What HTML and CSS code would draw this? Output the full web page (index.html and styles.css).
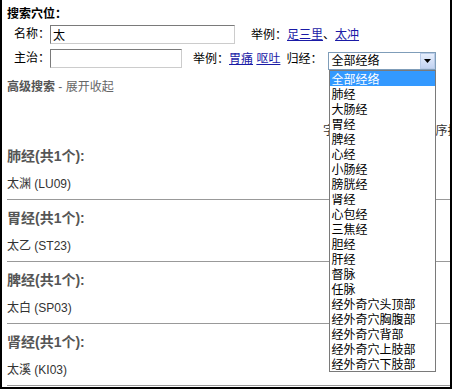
FILE: index.html
```html
<!DOCTYPE html>
<html lang="zh-CN">
<head>
    <meta charset="UTF-8">
    <title>搜索穴位</title>
    <link rel="stylesheet" href="styles.css">
</head>
<body>
    <div class="frame">
        <div class="search">
            <div class="title">搜索穴位：</div>
            <div class="row">
                <span class="label">名称：</span>
                <input class="name-input" type="text" value="太">
                <span class="example">举例：<a href="#">足三里</a>、<a href="#">太冲</a></span>
            </div>
            <div class="row">
                <span class="label">主治：</span>
                <input class="cure-input" type="text">
                <span class="example short">举例：<a href="#">胃痛</a> <a href="#">呕吐</a></span>
                <span class="meridian-label">归经：</span>
                <div class="select">
                    <span class="select-value">全部经络</span>
                    <span class="select-btn">
                        <svg width="7" height="4" viewBox="0 0 7 4"><path d="M0 0h7L3.5 4z" fill="#000"/></svg>
                    </span>
                    <ul class="select-list">
                        <li class="active">全部经络</li>
                        <li>肺经</li>
                        <li>大肠经</li>
                        <li>胃经</li>
                        <li>脾经</li>
                        <li>心经</li>
                        <li>小肠经</li>
                        <li>膀胱经</li>
                        <li>肾经</li>
                        <li>心包经</li>
                        <li>三焦经</li>
                        <li>胆经</li>
                        <li>肝经</li>
                        <li>督脉</li>
                        <li>任脉</li>
                        <li>经外奇穴头顶部</li>
                        <li>经外奇穴胸腹部</li>
                        <li>经外奇穴背部</li>
                        <li>经外奇穴上肢部</li>
                        <li>经外奇穴下肢部</li>
                    </ul>
                </div>
            </div>
            <div class="advanced"><b>高级搜索</b> - 展开收起</div>
            <div class="sort">字号：大 中 小 | 按顺序排序：</div>
        </div>

        <div class="group">
            <div class="group-title">肺经(共1个):</div>
            <div class="point">太渊 (LU09)</div>
        </div>
        <div class="group">
            <div class="group-title">胃经(共1个):</div>
            <div class="point">太乙 (ST23)</div>
        </div>
        <div class="group">
            <div class="group-title">脾经(共1个):</div>
            <div class="point">太白 (SP03)</div>
        </div>
        <div class="group">
            <div class="group-title">肾经(共1个):</div>
            <div class="point">太溪 (KI03)</div>
        </div>
    </div>
</body>
</html>
```

FILE: styles.css
```css
body {
    margin: 0;
    font-family: "Liberation Sans", "Noto Sans CJK SC", sans-serif;
    font-size: 12px;
    background-color: #fff;
}
.frame {
    width: 452px;
    height: 389px;
    box-sizing: border-box;
    border-left: 2px solid #000;
    border-right: 2px solid #000;
    border-bottom: 2px solid #000;
    padding-left: 5px;
    overflow: hidden;
}
.search {
    display: flex;
    flex-direction: column;
}
.title {
    margin-top: 6px;
    line-height: 16px;
    font-weight: bold;
    color: #000;
}
.row {
    display: flex;
    align-items: flex-start;
    margin-top: 3px;
    height: 19px;
    line-height: 19px;
}
.row + .row {
    margin-top: 5px;
}
.label {
    margin-left: 7px;
    width: 36px;
}
.row input {
    box-sizing: border-box;
    height: 19px;
    margin: 0;
    padding: 0 2px;
    border: 1px solid #7a7a7a;
    border-right-color: #ccc;
    border-bottom-color: #ccc;
    font-family: "Noto Sans CJK SC", sans-serif;
    font-size: 12px;
    color: #000;
}
.name-input {
    width: 185px;
}
.cure-input {
    width: 132px;
}
.example {
    margin-left: 16px;
    line-height: 20px;
}
.example.short {
    margin-left: 11px;
}
.example a {
    color: #1a1aa6;
    text-decoration: underline;
}
.meridian-label {
    margin-left: 6px;
    line-height: 20px;
    width: 42px;
}
.select {
    position: relative;
    box-sizing: border-box;
    width: 108px;
    height: 18px;
    margin-top: 3px;
    border: 1px solid #7f9db9;
    display: flex;
    align-items: center;
}
.select-value {
    flex: 1;
    padding-left: 2px;
    line-height: 16px;
}
.select-btn {
    width: 15px;
    height: 16px;
    box-sizing: border-box;
    border: 1px solid #b8cbe8;
    background: linear-gradient(#e6eefc, #c2d3f2);
    display: flex;
    align-items: center;
    justify-content: center;
}
.select-list {
    position: absolute;
    left: 0;
    top: 17px;
    width: 107px;
    box-sizing: border-box;
    margin: 0;
    padding: 0;
    list-style: none;
    background-color: #fff;
    border: 1px solid #7a7a7a;
    z-index: 2;
}
.select-list li {
    height: 15px;
    line-height: 15px;
    padding-left: 1px;
    font-family: "Noto Sans CJK SC", sans-serif;
    font-size: 12px;
    color: #000;
    white-space: nowrap;
}
.select-list li.active {
    background-color: #3399ff;
    color: #fff;
}
.advanced {
    margin-top: 11px;
    line-height: 16px;
    color: #666;
}
.advanced b {
    color: #555;
}
.sort {
    margin-top: 29px;
    line-height: 14px;
    height: 14px;
    padding-left: 316px;
    white-space: nowrap;
    color: #333;
}
.group {
    border-bottom: 1px solid #999;
    height: 61px;
    padding-top: 8px;
    box-sizing: border-box;
    height: 62px;
}
.group-title {
    line-height: 20px;
    font-size: 14px;
    font-weight: bold;
    color: #555;
}
.point {
    margin-top: 8px;
    line-height: 20px;
    color: #333;
}
```
